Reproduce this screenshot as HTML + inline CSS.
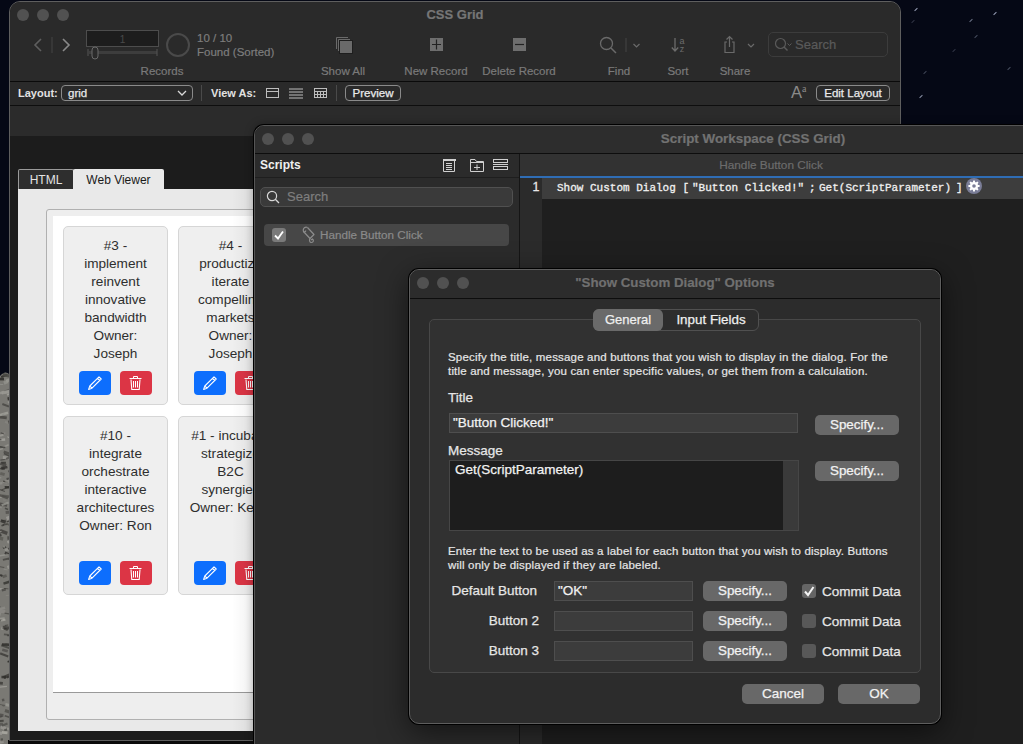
<!DOCTYPE html>
<html><head><meta charset="utf-8">
<style>
*{box-sizing:border-box;margin:0;padding:0}
html,body{width:1023px;height:744px;overflow:hidden;background:#05070f;font-family:"Liberation Sans",sans-serif}
.a{position:absolute}
.t{position:absolute;white-space:nowrap}
.w{-webkit-text-stroke:0.25px currentColor}
.dot{position:absolute;width:12px;height:12px;border-radius:50%;background:#515151}
</style></head><body>
<!-- desktop -->
<div class="a" style="left:0;top:0;width:1023px;height:744px;background:#050815"></div>
<div class="a" style="left:914px;top:9px;width:4px;height:1px;background:rgba(200,210,235,0.75);transform:rotate(-45deg)"></div>
<div class="a" style="left:993px;top:13px;width:4px;height:1px;background:rgba(200,210,235,0.75);transform:rotate(-45deg)"></div>
<div class="a" style="left:969px;top:20px;width:4px;height:1px;background:rgba(200,210,235,0.52);transform:rotate(-45deg)"></div>
<div class="a" style="left:974px;top:36px;width:4px;height:1px;background:rgba(200,210,235,0.34);transform:rotate(-45deg)"></div>
<div class="a" style="left:923px;top:72px;width:4px;height:1px;background:rgba(200,210,235,0.30);transform:rotate(-45deg)"></div>
<div class="a" style="left:1007px;top:68px;width:4px;height:1px;background:rgba(200,210,235,0.34);transform:rotate(-45deg)"></div>
<div class="a" style="left:919px;top:96px;width:4px;height:1px;background:rgba(200,210,235,0.68);transform:rotate(-45deg)"></div>
<div class="a" style="left:952px;top:50px;width:4px;height:1px;background:rgba(200,210,235,0.22);transform:rotate(-45deg)"></div>
<div class="a" style="left:911px;top:21px;width:4px;height:1px;background:rgba(200,210,235,0.22);transform:rotate(-45deg)"></div>

<svg class="a" style="left:0;top:368px" width="9" height="376" viewBox="0 0 9 376"><rect width="9" height="376" fill="#7a7974"/><rect x="-1.3" y="121.8" width="6.6" height="1.0" fill="#3c3b38" opacity="0.73" transform="rotate(20 1.9 121.8)"/><rect x="-2.1" y="80.7" width="4.9" height="1.4" fill="#9a9993" opacity="0.83" transform="rotate(-19 0.4 80.7)"/><rect x="3.9" y="83.9" width="8.6" height="2.4" fill="#2e2d2a" opacity="0.52" transform="rotate(18 8.2 83.9)"/><rect x="-1.4" y="108.9" width="2.8" height="1.6" fill="#9a9993" opacity="0.54" transform="rotate(4 -0.0 108.9)"/><rect x="-1.9" y="70.6" width="7.0" height="2.3" fill="#a8a7a1" opacity="0.77" transform="rotate(-4 1.6 70.6)"/><rect x="3.4" y="118.1" width="5.2" height="1.6" fill="#8c8b86" opacity="0.81" transform="rotate(-21 6.0 118.1)"/><rect x="2.4" y="112.9" width="4.4" height="2.0" fill="#9a9993" opacity="0.55" transform="rotate(-4 4.6 112.9)"/><rect x="-1.3" y="284.7" width="5.4" height="0.9" fill="#8c8b86" opacity="0.73" transform="rotate(19 1.4 284.7)"/><rect x="4.6" y="118.0" width="6.2" height="2.4" fill="#2e2d2a" opacity="0.88" transform="rotate(-1 7.7 118.0)"/><rect x="-2.3" y="249.7" width="6.9" height="2.5" fill="#a8a7a1" opacity="0.61" transform="rotate(-6 1.1 249.7)"/><rect x="-2.8" y="251.4" width="5.2" height="1.3" fill="#2e2d2a" opacity="0.59" transform="rotate(-11 -0.1 251.4)"/><rect x="1.4" y="277.6" width="8.4" height="2.1" fill="#3c3b38" opacity="0.72" transform="rotate(19 5.6 277.6)"/><rect x="6.5" y="308.0" width="3.9" height="1.9" fill="#3c3b38" opacity="0.88" transform="rotate(-17 8.5 308.0)"/><rect x="-0.4" y="66.3" width="3.6" height="2.1" fill="#a8a7a1" opacity="0.61" transform="rotate(-18 1.4 66.3)"/><rect x="3.7" y="201.0" width="4.2" height="1.1" fill="#8c8b86" opacity="0.76" transform="rotate(12 5.8 201.0)"/><rect x="6.6" y="171.7" width="8.7" height="2.6" fill="#a8a7a1" opacity="0.66" transform="rotate(-20 10.9 171.7)"/><rect x="-2.3" y="238.5" width="2.5" height="1.4" fill="#3c3b38" opacity="0.74" transform="rotate(-20 -1.1 238.5)"/><rect x="2.9" y="213.1" width="8.6" height="2.5" fill="#2e2d2a" opacity="0.75" transform="rotate(-18 7.2 213.1)"/><rect x="0.8" y="94.8" width="4.5" height="1.1" fill="#a8a7a1" opacity="0.69" transform="rotate(-9 3.1 94.8)"/><rect x="5.2" y="54.2" width="7.2" height="2.1" fill="#8c8b86" opacity="0.51" transform="rotate(23 8.8 54.2)"/><rect x="-1.4" y="198.6" width="5.8" height="0.9" fill="#4a4945" opacity="0.85" transform="rotate(10 1.5 198.6)"/><rect x="1.0" y="98.2" width="3.2" height="2.9" fill="#4a4945" opacity="0.63" transform="rotate(-14 2.6 98.2)"/><rect x="7.8" y="305.1" width="8.0" height="3.0" fill="#8c8b86" opacity="0.82" transform="rotate(-15 11.8 305.1)"/><rect x="5.0" y="185.3" width="8.9" height="2.9" fill="#2e2d2a" opacity="0.78" transform="rotate(23 9.5 185.3)"/><rect x="7.3" y="168.2" width="8.9" height="3.4" fill="#2e2d2a" opacity="0.54" transform="rotate(-1 11.8 168.2)"/><rect x="2.3" y="127.0" width="8.9" height="2.4" fill="#4a4945" opacity="0.64" transform="rotate(7 6.8 127.0)"/><rect x="-1.7" y="313.8" width="4.7" height="2.7" fill="#2e2d2a" opacity="0.67" transform="rotate(7 0.7 313.8)"/><rect x="7.4" y="32.6" width="7.1" height="2.1" fill="#9a9993" opacity="0.79" transform="rotate(-16 10.9 32.6)"/><rect x="-1.3" y="47.8" width="8.3" height="3.0" fill="#4a4945" opacity="0.89" transform="rotate(8 2.8 47.8)"/><rect x="3.0" y="131.8" width="2.9" height="0.8" fill="#8c8b86" opacity="0.54" transform="rotate(12 4.5 131.8)"/><rect x="7.9" y="52.4" width="3.4" height="3.2" fill="#2e2d2a" opacity="0.62" transform="rotate(-13 9.5 52.4)"/><rect x="-0.1" y="220.5" width="4.9" height="1.2" fill="#a8a7a1" opacity="0.86" transform="rotate(8 2.3 220.5)"/><rect x="2.7" y="306.5" width="7.8" height="3.2" fill="#2e2d2a" opacity="0.71" transform="rotate(-24 6.6 306.5)"/><rect x="-1.0" y="165.5" width="2.0" height="3.0" fill="#3c3b38" opacity="0.75" transform="rotate(-19 0.0 165.5)"/><rect x="4.5" y="23.2" width="5.7" height="2.1" fill="#8c8b86" opacity="0.52" transform="rotate(-15 7.4 23.2)"/><rect x="-1.9" y="15.9" width="5.2" height="0.9" fill="#9a9993" opacity="0.68" transform="rotate(6 0.7 15.9)"/><rect x="2.6" y="190.1" width="6.8" height="2.0" fill="#3c3b38" opacity="0.70" transform="rotate(-13 6.1 190.1)"/><rect x="6.6" y="196.7" width="8.5" height="3.3" fill="#9a9993" opacity="0.84" transform="rotate(-18 10.9 196.7)"/><rect x="1.9" y="45.7" width="2.5" height="1.4" fill="#4a4945" opacity="0.62" transform="rotate(-19 3.1 45.7)"/><rect x="7.3" y="292.1" width="6.5" height="1.8" fill="#2e2d2a" opacity="0.89" transform="rotate(-14 10.6 292.1)"/><rect x="1.4" y="358.1" width="5.4" height="3.5" fill="#9a9993" opacity="0.78" transform="rotate(25 4.1 358.1)"/><rect x="1.6" y="151.8" width="4.5" height="1.0" fill="#3c3b38" opacity="0.72" transform="rotate(-3 3.9 151.8)"/><rect x="0.6" y="6.8" width="6.4" height="2.2" fill="#2e2d2a" opacity="0.89" transform="rotate(-20 3.8 6.8)"/><rect x="-2.6" y="99.9" width="7.5" height="1.5" fill="#3c3b38" opacity="0.84" transform="rotate(9 1.2 99.9)"/><rect x="1.5" y="355.7" width="5.8" height="2.2" fill="#3c3b38" opacity="0.54" transform="rotate(-22 4.3 355.7)"/><rect x="1.7" y="258.8" width="2.5" height="3.3" fill="#a8a7a1" opacity="0.53" transform="rotate(18 2.9 258.8)"/><rect x="6.5" y="25.1" width="5.2" height="1.7" fill="#a8a7a1" opacity="0.75" transform="rotate(-23 9.1 25.1)"/><rect x="7.3" y="266.8" width="8.8" height="1.5" fill="#3c3b38" opacity="0.75" transform="rotate(2 11.7 266.8)"/><rect x="1.9" y="77.4" width="6.7" height="1.5" fill="#a8a7a1" opacity="0.51" transform="rotate(-24 5.3 77.4)"/><rect x="7.8" y="190.1" width="5.6" height="1.5" fill="#4a4945" opacity="0.83" transform="rotate(-3 10.6 190.1)"/><rect x="6.2" y="186.1" width="4.8" height="2.2" fill="#9a9993" opacity="0.64" transform="rotate(17 8.6 186.1)"/><rect x="4.0" y="265.7" width="4.8" height="1.7" fill="#2e2d2a" opacity="0.51" transform="rotate(6 6.4 265.7)"/><rect x="1.7" y="330.8" width="2.4" height="2.6" fill="#4a4945" opacity="0.77" transform="rotate(-11 2.9 330.8)"/><rect x="0.2" y="91.1" width="5.2" height="1.2" fill="#3c3b38" opacity="0.65" transform="rotate(-9 2.8 91.1)"/><rect x="0.6" y="370.3" width="2.2" height="3.2" fill="#2e2d2a" opacity="0.50" transform="rotate(-6 1.7 370.3)"/><rect x="2.5" y="178.5" width="3.4" height="2.2" fill="#3c3b38" opacity="0.83" transform="rotate(-18 4.2 178.5)"/><rect x="1.3" y="220.6" width="4.1" height="2.5" fill="#4a4945" opacity="0.84" transform="rotate(-17 3.4 220.6)"/><rect x="5.6" y="335.7" width="6.2" height="2.9" fill="#a8a7a1" opacity="0.56" transform="rotate(11 8.7 335.7)"/><rect x="-2.5" y="241.9" width="7.8" height="3.2" fill="#8c8b86" opacity="0.78" transform="rotate(0 1.4 241.9)"/><rect x="5.3" y="342.1" width="6.0" height="3.0" fill="#4a4945" opacity="0.73" transform="rotate(20 8.3 342.1)"/><rect x="4.6" y="256.8" width="3.6" height="0.9" fill="#3c3b38" opacity="0.88" transform="rotate(-6 6.4 256.8)"/><rect x="-2.4" y="169.7" width="2.1" height="2.2" fill="#3c3b38" opacity="0.50" transform="rotate(15 -1.4 169.7)"/><rect x="2.5" y="281.3" width="5.7" height="2.6" fill="#4a4945" opacity="0.69" transform="rotate(15 5.4 281.3)"/><rect x="-0.4" y="318.1" width="7.3" height="1.4" fill="#a8a7a1" opacity="0.70" transform="rotate(-6 3.2 318.1)"/><rect x="4.5" y="180.1" width="7.4" height="2.5" fill="#9a9993" opacity="0.74" transform="rotate(-8 8.2 180.1)"/><rect x="4.6" y="245.0" width="6.3" height="1.2" fill="#3c3b38" opacity="0.61" transform="rotate(9 7.8 245.0)"/><rect x="4.4" y="260.3" width="4.0" height="2.2" fill="#3c3b38" opacity="0.81" transform="rotate(25 6.5 260.3)"/><rect x="0.4" y="206.5" width="2.6" height="2.1" fill="#2e2d2a" opacity="0.83" transform="rotate(23 1.7 206.5)"/><rect x="-0.0" y="169.0" width="3.5" height="3.4" fill="#4a4945" opacity="0.54" transform="rotate(12 1.7 169.0)"/><rect x="1.0" y="98.4" width="6.2" height="2.5" fill="#2e2d2a" opacity="0.78" transform="rotate(-13 4.1 98.4)"/><rect x="2.3" y="337.5" width="2.2" height="0.8" fill="#3c3b38" opacity="0.66" transform="rotate(11 3.4 337.5)"/><rect x="1.1" y="156.5" width="2.8" height="1.7" fill="#3c3b38" opacity="0.84" transform="rotate(-19 2.6 156.5)"/><rect x="4.8" y="348.3" width="8.3" height="1.6" fill="#3c3b38" opacity="0.66" transform="rotate(18 9.0 348.3)"/><rect x="7.2" y="28.7" width="7.3" height="3.1" fill="#2e2d2a" opacity="0.83" transform="rotate(-11 10.8 28.7)"/><rect x="-0.3" y="351.8" width="3.9" height="2.2" fill="#3c3b38" opacity="0.81" transform="rotate(-4 1.7 351.8)"/><rect x="5.4" y="10.9" width="4.8" height="3.2" fill="#9a9993" opacity="0.79" transform="rotate(-23 7.8 10.9)"/><rect x="2.0" y="275.4" width="7.3" height="2.5" fill="#2e2d2a" opacity="0.86" transform="rotate(3 5.6 275.4)"/><rect x="1.6" y="64.2" width="4.0" height="1.5" fill="#8c8b86" opacity="0.60" transform="rotate(8 3.5 64.2)"/><rect x="3.1" y="113.1" width="4.8" height="1.3" fill="#2e2d2a" opacity="0.70" transform="rotate(16 5.5 113.1)"/><rect x="2.0" y="206.9" width="4.3" height="2.8" fill="#4a4945" opacity="0.58" transform="rotate(-20 4.1 206.9)"/><rect x="-2.0" y="128.6" width="3.7" height="1.5" fill="#9a9993" opacity="0.80" transform="rotate(-4 -0.2 128.6)"/><rect x="2.8" y="155.6" width="4.6" height="1.7" fill="#3c3b38" opacity="0.73" transform="rotate(-7 5.1 155.6)"/><rect x="2.8" y="258.2" width="7.5" height="3.1" fill="#2e2d2a" opacity="0.65" transform="rotate(7 6.6 258.2)"/><rect x="0.4" y="162.4" width="7.7" height="3.4" fill="#3c3b38" opacity="0.78" transform="rotate(20 4.3 162.4)"/><rect x="3.5" y="177.9" width="2.0" height="1.9" fill="#8c8b86" opacity="0.84" transform="rotate(24 4.5 177.9)"/><rect x="-1.8" y="93.4" width="3.1" height="2.2" fill="#8c8b86" opacity="0.78" transform="rotate(17 -0.3 93.4)"/><rect x="-2.1" y="336.5" width="7.4" height="0.8" fill="#4a4945" opacity="0.87" transform="rotate(7 1.7 336.5)"/><rect x="-1.6" y="114.2" width="3.8" height="2.5" fill="#9a9993" opacity="0.54" transform="rotate(-10 0.3 114.2)"/><rect x="-0.9" y="354.8" width="3.8" height="2.9" fill="#4a4945" opacity="0.62" transform="rotate(-2 1.0 354.8)"/><rect x="4.1" y="360.6" width="8.2" height="2.1" fill="#2e2d2a" opacity="0.51" transform="rotate(-4 8.2 360.6)"/><rect x="-2.4" y="244.3" width="3.4" height="3.2" fill="#9a9993" opacity="0.60" transform="rotate(8 -0.7 244.3)"/><rect x="-0.5" y="347.9" width="2.2" height="1.7" fill="#4a4945" opacity="0.66" transform="rotate(-25 0.6 347.9)"/><rect x="6.3" y="109.8" width="2.5" height="2.1" fill="#2e2d2a" opacity="0.59" transform="rotate(-14 7.5 109.8)"/><rect x="0.2" y="285.9" width="8.7" height="2.1" fill="#2e2d2a" opacity="0.69" transform="rotate(21 4.6 285.9)"/><rect x="3.5" y="21.2" width="8.5" height="0.9" fill="#4a4945" opacity="0.56" transform="rotate(-22 7.8 21.2)"/><rect x="1.3" y="22.6" width="8.3" height="3.2" fill="#9a9993" opacity="0.87" transform="rotate(-9 5.5 22.6)"/><rect x="7.3" y="69.8" width="7.2" height="0.9" fill="#a8a7a1" opacity="0.84" transform="rotate(24 10.9 69.8)"/><rect x="-1.8" y="166.4" width="2.5" height="1.0" fill="#2e2d2a" opacity="0.72" transform="rotate(13 -0.5 166.4)"/><rect x="5.5" y="142.9" width="4.2" height="3.0" fill="#4a4945" opacity="0.69" transform="rotate(-6 7.5 142.9)"/><rect x="-0.9" y="345.7" width="4.5" height="3.2" fill="#3c3b38" opacity="0.60" transform="rotate(6 1.4 345.7)"/><rect x="1.1" y="152.2" width="5.2" height="3.0" fill="#2e2d2a" opacity="0.80" transform="rotate(20 3.8 152.2)"/><rect x="-0.0" y="127.5" width="8.7" height="2.5" fill="#4a4945" opacity="0.78" transform="rotate(21 4.3 127.5)"/><rect x="4.9" y="111.8" width="6.2" height="3.0" fill="#9a9993" opacity="0.51" transform="rotate(-13 8.0 111.8)"/><rect x="7.5" y="178.7" width="8.7" height="1.8" fill="#3c3b38" opacity="0.83" transform="rotate(-18 11.9 178.7)"/><rect x="-2.9" y="186.7" width="8.5" height="1.6" fill="#9a9993" opacity="0.74" transform="rotate(-9 1.4 186.7)"/><rect x="1.0" y="120.2" width="7.5" height="1.0" fill="#2e2d2a" opacity="0.60" transform="rotate(-22 4.7 120.2)"/><rect x="3.1" y="12.7" width="4.3" height="3.4" fill="#9a9993" opacity="0.61" transform="rotate(-21 5.2 12.7)"/><rect x="2.5" y="36.3" width="7.0" height="2.0" fill="#3c3b38" opacity="0.68" transform="rotate(20 6.0 36.3)"/><rect x="2.9" y="88.3" width="7.4" height="2.9" fill="#a8a7a1" opacity="0.62" transform="rotate(3 6.6 88.3)"/><rect x="5.1" y="140.2" width="3.4" height="1.5" fill="#2e2d2a" opacity="0.61" transform="rotate(20 6.8 140.2)"/><rect x="-2.3" y="70.8" width="3.8" height="1.5" fill="#4a4945" opacity="0.82" transform="rotate(8 -0.4 70.8)"/><rect x="-1.9" y="372.6" width="5.3" height="3.0" fill="#a8a7a1" opacity="0.52" transform="rotate(-10 0.8 372.6)"/><rect x="-0.9" y="44.8" width="8.8" height="2.4" fill="#a8a7a1" opacity="0.71" transform="rotate(-16 3.5 44.8)"/><rect x="5.5" y="226.7" width="6.7" height="0.8" fill="#8c8b86" opacity="0.75" transform="rotate(-14 8.9 226.7)"/><rect x="-1.4" y="138.6" width="3.4" height="1.5" fill="#8c8b86" opacity="0.87" transform="rotate(16 0.3 138.6)"/><rect x="1.5" y="307.9" width="4.6" height="2.5" fill="#2e2d2a" opacity="0.82" transform="rotate(2 3.8 307.9)"/><rect x="-1.9" y="23.8" width="4.8" height="2.3" fill="#9a9993" opacity="0.76" transform="rotate(-5 0.5 23.8)"/><rect x="7.9" y="102.0" width="6.7" height="1.9" fill="#4a4945" opacity="0.73" transform="rotate(-7 11.2 102.0)"/><rect x="6.5" y="156.6" width="9.0" height="1.8" fill="#4a4945" opacity="0.66" transform="rotate(22 11.0 156.6)"/><rect x="-1.3" y="163.2" width="2.8" height="1.0" fill="#a8a7a1" opacity="0.68" transform="rotate(-17 0.1 163.2)"/><rect x="3.1" y="5.6" width="6.5" height="3.3" fill="#4a4945" opacity="0.87" transform="rotate(12 6.3 5.6)"/><rect x="0.8" y="64.6" width="3.1" height="1.3" fill="#3c3b38" opacity="0.70" transform="rotate(15 2.4 64.6)"/><rect x="-0.8" y="363.5" width="2.9" height="3.3" fill="#a8a7a1" opacity="0.63" transform="rotate(5 0.6 363.5)"/><rect x="-2.1" y="239.3" width="7.0" height="2.7" fill="#8c8b86" opacity="0.81" transform="rotate(-14 1.4 239.3)"/><rect x="6.3" y="152.1" width="7.8" height="1.3" fill="#3c3b38" opacity="0.88" transform="rotate(-17 10.2 152.1)"/><rect x="-1.4" y="135.1" width="8.8" height="3.0" fill="#4a4945" opacity="0.84" transform="rotate(9 3.0 135.1)"/><rect x="0.6" y="251.1" width="4.7" height="2.0" fill="#a8a7a1" opacity="0.76" transform="rotate(-10 2.9 251.1)"/><rect x="1.3" y="93.7" width="4.6" height="2.2" fill="#2e2d2a" opacity="0.75" transform="rotate(-1 3.6 93.7)"/><rect x="5.4" y="88.5" width="7.5" height="2.0" fill="#3c3b38" opacity="0.66" transform="rotate(-22 9.1 88.5)"/><rect x="1.0" y="134.8" width="7.6" height="2.2" fill="#9a9993" opacity="0.75" transform="rotate(-21 4.8 134.8)"/><rect x="5.6" y="275.8" width="5.6" height="0.9" fill="#3c3b38" opacity="0.76" transform="rotate(14 8.3 275.8)"/><rect x="-2.3" y="9.7" width="6.3" height="2.7" fill="#2e2d2a" opacity="0.89" transform="rotate(-0 0.9 9.7)"/><rect x="7.1" y="359.7" width="3.2" height="2.9" fill="#9a9993" opacity="0.83" transform="rotate(6 8.7 359.7)"/><rect x="0.6" y="94.8" width="6.3" height="3.2" fill="#3c3b38" opacity="0.70" transform="rotate(21 3.7 94.8)"/><rect x="-0.1" y="78.3" width="5.5" height="1.7" fill="#2e2d2a" opacity="0.66" transform="rotate(7 2.7 78.3)"/><rect x="0.6" y="104.6" width="4.6" height="2.9" fill="#4a4945" opacity="0.52" transform="rotate(18 2.9 104.6)"/><rect x="2.0" y="363.3" width="5.7" height="2.7" fill="#a8a7a1" opacity="0.90" transform="rotate(6 4.8 363.3)"/><rect x="5.8" y="148.2" width="3.9" height="3.5" fill="#a8a7a1" opacity="0.63" transform="rotate(-21 7.7 148.2)"/><rect x="3.8" y="86.5" width="8.7" height="1.6" fill="#3c3b38" opacity="0.76" transform="rotate(24 8.1 86.5)"/><rect x="4.3" y="220.3" width="4.2" height="0.8" fill="#2e2d2a" opacity="0.62" transform="rotate(6 6.4 220.3)"/><path d="M0 8 Q5 2 9 6 L9 0 L0 0Z" fill="#050815"/></svg>

<!-- MAIN WINDOW -->
<div class="a" style="left:8px;top:740px;width:260px;height:4px;background:#0b0b0b"></div>
<div id="main" class="a" style="left:9px;top:1px;width:892px;height:740px;border-radius:11px 11px 0 0;background:#1c1c1c;border:1px solid #5e5e5e;overflow:hidden">
  <div class="a" style="left:0;top:0;width:892px;height:79px;background:#2a2a2a"></div>
  <div class="a" style="left:0;top:79px;width:892px;height:1px;background:#0a0a0a"></div>
  <div class="a" style="left:0;top:80px;width:892px;height:23px;background:#2a2a2a"></div>
  <div class="a" style="left:0;top:103px;width:892px;height:1px;background:#0e0e0e"></div>
  <div class="a" style="left:0;top:104px;width:892px;height:30px;background:#2b2b2b"></div>
  <div class="a" style="left:0;top:134px;width:892px;height:610px;background:#1c1c1c"></div>
</div>
<div class="dot" style="left:17px;top:9px"></div>
<div class="dot" style="left:37px;top:9px"></div>
<div class="dot" style="left:57px;top:9px"></div>
<div class="t" style="left:405px;top:7px;width:100px;text-align:center;font:bold 13px 'Liberation Sans';color:#767676;-webkit-text-stroke:0.2px #767676">CSS Grid</div>

<!-- toolbar: records -->
<svg class="a" style="left:30px;top:36px" width="46" height="18" viewBox="0 0 46 18"><path d="M11 3 L5 9 L11 15" fill="none" stroke="#5f5f5f" stroke-width="1.6"/><path d="M22 1 V17" stroke="#444" stroke-width="1"/><path d="M33 3 L39 9 L33 15" fill="none" stroke="#8a8a8a" stroke-width="1.6"/></svg>
<div class="a" style="left:86px;top:30px;width:73px;height:17px;background:#1d1d1d;border:1px solid #4d4d4d"></div>
<div class="t" style="left:86px;top:34px;width:73px;text-align:center;font:10px 'Liberation Sans';color:#4a4a4a">1</div>
<svg class="a" style="left:86px;top:46px" width="74" height="14" viewBox="0 0 74 14"><rect x="3" y="5" width="68" height="3" fill="#3d3d3d"/><path d="M2 3 V10 M71 3 V10" stroke="#555" stroke-width="1"/><rect x="6" y="1" width="6" height="12" rx="3" fill="#2a2a2a" stroke="#6a6a6a" stroke-width="1"/></svg>
<div class="a" style="left:166px;top:33px;width:24px;height:24px;border-radius:50%;border:2.5px solid #4a4a4a"></div>
<div class="t" style="left:197px;top:32px;font:11.5px 'Liberation Sans';color:#7d7d7d;-webkit-text-stroke:0.2px #7d7d7d">10 / 10</div>
<div class="t" style="left:197px;top:46px;font:11.5px 'Liberation Sans';color:#7d7d7d;-webkit-text-stroke:0.2px #7d7d7d">Found (Sorted)</div>
<div class="t" style="left:122px;top:65px;width:80px;text-align:center;font:11.5px 'Liberation Sans';color:#7a7a7a;-webkit-text-stroke:0.2px #7a7a7a">Records</div>

<!-- show all / new / delete -->
<svg class="a" style="left:334px;top:36px" width="20" height="18" viewBox="0 0 20 18"><path d="M2.5 13 V1.5 H14" fill="none" stroke="#6a6a6a"/><path d="M4.5 15 V3.5 H16" fill="none" stroke="#6a6a6a"/><rect x="5" y="4" width="14" height="14" fill="#1e1e1e"/><rect x="6" y="5" width="12" height="12" fill="#6a6a6a"/></svg>
<div class="t" style="left:303px;top:65px;width:80px;text-align:center;font:11.5px 'Liberation Sans';color:#7a7a7a;-webkit-text-stroke:0.2px #7a7a7a">Show All</div>
<svg class="a" style="left:430px;top:38px" width="13" height="13" viewBox="0 0 13 13"><rect width="13" height="13" fill="#6e6e6e"/><path d="M6.5 1.5 V11.5 M2 6.5 H11" stroke="#222" stroke-width="1.2"/></svg>
<div class="t" style="left:386px;top:65px;width:100px;text-align:center;font:11.5px 'Liberation Sans';color:#7a7a7a;-webkit-text-stroke:0.2px #7a7a7a">New Record</div>
<svg class="a" style="left:513px;top:38px" width="13" height="13" viewBox="0 0 13 13"><rect width="13" height="13" fill="#6e6e6e"/><path d="M2 6.5 H11" stroke="#222" stroke-width="1.2"/></svg>
<div class="t" style="left:469px;top:65px;width:100px;text-align:center;font:11.5px 'Liberation Sans';color:#7a7a7a;-webkit-text-stroke:0.2px #7a7a7a">Delete Record</div>

<!-- find / sort / share -->
<svg class="a" style="left:598px;top:36px" width="46" height="18" viewBox="0 0 46 18"><circle cx="8.5" cy="7.5" r="6" fill="none" stroke="#6a6a6a" stroke-width="1.3"/><path d="M13 12 L18 17" stroke="#6a6a6a" stroke-width="1.5"/><path d="M28 2 V16" stroke="#444"/><path d="M35.5 8 L38.5 11 L41.5 8" fill="none" stroke="#6a6a6a" stroke-width="1.2"/></svg>
<div class="t" style="left:589px;top:65px;width:60px;text-align:center;font:11.5px 'Liberation Sans';color:#7a7a7a;-webkit-text-stroke:0.2px #7a7a7a">Find</div>
<svg class="a" style="left:670px;top:35px" width="18" height="19" viewBox="0 0 18 19"><path d="M5 3 V16 M1.8 12.5 L5 16 L8.2 12.5" fill="none" stroke="#6c6c6c" stroke-width="1.3"/><text x="9.5" y="8.5" font-family="Liberation Sans" font-size="9" fill="#6c6c6c">a</text><text x="9.8" y="17" font-family="Liberation Sans" font-size="9" fill="#6c6c6c">z</text></svg>
<div class="t" style="left:648px;top:65px;width:60px;text-align:center;font:11.5px 'Liberation Sans';color:#7a7a7a;-webkit-text-stroke:0.2px #7a7a7a">Sort</div>
<svg class="a" style="left:722px;top:35px" width="36" height="20" viewBox="0 0 36 20"><path d="M7.5 1.5 V12 M4.5 4.5 L7.5 1.5 L10.5 4.5" fill="none" stroke="#6a6a6a" stroke-width="1.2"/><path d="M5 7 H3 V17.5 H12 V7 H10" fill="none" stroke="#6a6a6a" stroke-width="1.2"/><path d="M26 9 L29 12 L32 9" fill="none" stroke="#6a6a6a" stroke-width="1.2"/></svg>
<div class="t" style="left:705px;top:65px;width:60px;text-align:center;font:11.5px 'Liberation Sans';color:#7a7a7a;-webkit-text-stroke:0.2px #7a7a7a">Share</div>
<div class="a" style="left:768px;top:32px;width:120px;height:25px;border:1px solid #3c3c3c;border-radius:5px;background:#2a2a2a"></div>
<svg class="a" style="left:774px;top:37px" width="20" height="16" viewBox="0 0 20 16"><circle cx="6.5" cy="6.5" r="5" fill="none" stroke="#5a5a5a" stroke-width="1.2"/><path d="M10 10 L13.5 13.5" stroke="#5a5a5a" stroke-width="1.4"/><path d="M13.5 6.5 L15.5 8.5 L17.5 6.5" fill="none" stroke="#5a5a5a" stroke-width="1"/></svg>
<div class="t" style="left:795px;top:37px;font:13px 'Liberation Sans';color:#5a5a5a;-webkit-text-stroke:0.2px #5a5a5a">Search</div>

<!-- layout bar -->
<div class="t" style="left:18px;top:87px;font:bold 11px 'Liberation Sans';color:#e2e2e2">Layout:</div>
<div class="a" style="left:61px;top:85px;width:132px;height:16px;border:1px solid #8a8a8a;border-radius:4px"></div>
<div class="t" style="left:68px;top:87px;font:11.5px 'Liberation Sans';color:#e8e8e8;-webkit-text-stroke:0.25px #e8e8e8">grid</div>
<svg class="a" style="left:176px;top:88px" width="12" height="10" viewBox="0 0 12 10"><path d="M2 3 L6 7 L10 3" fill="none" stroke="#d8d8d8" stroke-width="1.3"/></svg>
<div class="a" style="left:201px;top:85px;width:1px;height:16px;background:#4a4a4a"></div>
<div class="t" style="left:211px;top:87px;font:bold 11px 'Liberation Sans';color:#e2e2e2">View As:</div>
<svg class="a" style="left:265px;top:87px" width="64" height="12" viewBox="0 0 64 12"><rect x="1.5" y="1.5" width="12" height="9" fill="none" stroke="#bdbdbd"/><path d="M1.5 4.5 H13.5" stroke="#bdbdbd"/><path d="M24 2 H38 M24 5 H38 M24 8 H38 M24 11 H38" stroke="#bdbdbd"/><rect x="49.5" y="1.5" width="12" height="9" fill="none" stroke="#bdbdbd"/><path d="M49.5 4.5 H61.5 M49.5 7.5 H61.5 M52.5 4.5 V10.5 M55.5 4.5 V10.5 M58.5 4.5 V10.5" stroke="#bdbdbd"/></svg>
<div class="a" style="left:336px;top:85px;width:1px;height:16px;background:#4a4a4a"></div>
<div class="a" style="left:345px;top:85px;width:56px;height:16px;border:1px solid #8a8a8a;border-radius:4px"></div>
<div class="t" style="left:345px;top:87px;width:56px;text-align:center;font:11.5px 'Liberation Sans';color:#eaeaea;-webkit-text-stroke:0.25px #eaeaea">Preview</div>
<div class="t" style="left:791px;top:83px;font:16.5px 'Liberation Sans';color:#8a8a8a;line-height:18px">A<span style="font:10px 'Liberation Serif';vertical-align:6px">a</span></div>
<div class="a" style="left:816px;top:85px;width:74px;height:16px;border:1px solid #8a8a8a;border-radius:4px"></div>
<div class="t" style="left:816px;top:87px;width:74px;text-align:center;font:11.5px 'Liberation Sans';color:#eaeaea;-webkit-text-stroke:0.25px #eaeaea">Edit Layout</div>

<!-- web viewer panel -->
<div class="a" style="left:18px;top:169px;width:56px;height:21px;background:#2e2e2e;border:1px solid #9a9a9a;border-bottom:none;border-radius:2px 2px 0 0"></div>
<div class="t" style="left:18px;top:173px;width:56px;text-align:center;font:12px 'Liberation Sans';color:#e4e4e4">HTML</div>
<div class="a" style="left:18px;top:189px;width:240px;height:542px;background:#e9e9e9"></div>
<div class="a" style="left:73px;top:169px;width:91px;height:21px;background:#e9e9e9;border-radius:2px 2px 0 0"></div>
<div class="t" style="left:73px;top:173px;width:91px;text-align:center;font:12px 'Liberation Sans';color:#1a1a1a">Web Viewer</div>
<div class="a" style="left:46px;top:209px;width:220px;height:511px;border:1px solid #b0b0b0;border-radius:3px;background:#eeeeee"></div>
<div class="a" style="left:53px;top:216px;width:210px;height:477px;background:#fff;border-bottom:1px solid #999"></div>
<div class="a" style="left:63px;top:226px;width:105px;height:179px;background:#efefef;border:1px solid #d6d6d6;border-radius:5px"></div>
<div class="t" style="left:43px;top:237.5px;width:145px;height:18px;line-height:18px;text-align:center;font:13.6px 'Liberation Sans';color:#2e2e2e">#3 -</div>
<div class="t" style="left:43px;top:255.5px;width:145px;height:18px;line-height:18px;text-align:center;font:13.6px 'Liberation Sans';color:#2e2e2e">implement</div>
<div class="t" style="left:43px;top:273.5px;width:145px;height:18px;line-height:18px;text-align:center;font:13.6px 'Liberation Sans';color:#2e2e2e">reinvent</div>
<div class="t" style="left:43px;top:291.5px;width:145px;height:18px;line-height:18px;text-align:center;font:13.6px 'Liberation Sans';color:#2e2e2e">innovative</div>
<div class="t" style="left:43px;top:309.5px;width:145px;height:18px;line-height:18px;text-align:center;font:13.6px 'Liberation Sans';color:#2e2e2e">bandwidth</div>
<div class="t" style="left:43px;top:327.5px;width:145px;height:18px;line-height:18px;text-align:center;font:13.6px 'Liberation Sans';color:#2e2e2e">Owner:</div>
<div class="t" style="left:43px;top:345.5px;width:145px;height:18px;line-height:18px;text-align:center;font:13.6px 'Liberation Sans';color:#2e2e2e">Joseph</div>
<div class="a" style="left:79px;top:371px;width:32px;height:24px;background:#0d6efd;border-radius:4px"></div>
<svg class="a" style="left:87px;top:375px" width="16" height="16" viewBox="0 0 16 16"><path d="M12 1.8 L14.2 4 L5 13.2 L1.6 14.4 L2.8 11 Z M10.5 3.3 L12.7 5.5 M2.8 11 L5 13.2" fill="none" stroke="#fff" stroke-width="1.1" stroke-linejoin="round"/></svg>
<div class="a" style="left:120px;top:371px;width:32px;height:24px;background:#dc3545;border-radius:4px"></div>
<svg class="a" style="left:128px;top:375px" width="16" height="16" viewBox="0 0 16 16" style="margin-left:1px"><path d="M1.5 3.5 H13.5 M5.5 3 V1.5 H9.5 V3" fill="none" stroke="#fff" stroke-width="1"/><path d="M3 4.5 L3.8 14.5 H11.2 L12 4.5" fill="none" stroke="#fff" stroke-width="1.1"/><path d="M5.5 6 V12.5 M7.5 6 V12.5 M9.5 6 V12.5" stroke="#fff" stroke-width="1"/></svg>
<div class="a" style="left:178px;top:226px;width:105px;height:179px;background:#efefef;border:1px solid #d6d6d6;border-radius:5px"></div>
<div class="t" style="left:158px;top:237.5px;width:145px;height:18px;line-height:18px;text-align:center;font:13.6px 'Liberation Sans';color:#2e2e2e">#4 -</div>
<div class="t" style="left:158px;top:255.5px;width:145px;height:18px;line-height:18px;text-align:center;font:13.6px 'Liberation Sans';color:#2e2e2e">productize</div>
<div class="t" style="left:158px;top:273.5px;width:145px;height:18px;line-height:18px;text-align:center;font:13.6px 'Liberation Sans';color:#2e2e2e">iterate</div>
<div class="t" style="left:158px;top:291.5px;width:145px;height:18px;line-height:18px;text-align:center;font:13.6px 'Liberation Sans';color:#2e2e2e">compelling</div>
<div class="t" style="left:158px;top:309.5px;width:145px;height:18px;line-height:18px;text-align:center;font:13.6px 'Liberation Sans';color:#2e2e2e">markets</div>
<div class="t" style="left:158px;top:327.5px;width:145px;height:18px;line-height:18px;text-align:center;font:13.6px 'Liberation Sans';color:#2e2e2e">Owner:</div>
<div class="t" style="left:158px;top:345.5px;width:145px;height:18px;line-height:18px;text-align:center;font:13.6px 'Liberation Sans';color:#2e2e2e">Joseph</div>
<div class="a" style="left:194px;top:371px;width:32px;height:24px;background:#0d6efd;border-radius:4px"></div>
<svg class="a" style="left:202px;top:375px" width="16" height="16" viewBox="0 0 16 16"><path d="M12 1.8 L14.2 4 L5 13.2 L1.6 14.4 L2.8 11 Z M10.5 3.3 L12.7 5.5 M2.8 11 L5 13.2" fill="none" stroke="#fff" stroke-width="1.1" stroke-linejoin="round"/></svg>
<div class="a" style="left:235px;top:371px;width:32px;height:24px;background:#dc3545;border-radius:4px"></div>
<svg class="a" style="left:243px;top:375px" width="16" height="16" viewBox="0 0 16 16" style="margin-left:1px"><path d="M1.5 3.5 H13.5 M5.5 3 V1.5 H9.5 V3" fill="none" stroke="#fff" stroke-width="1"/><path d="M3 4.5 L3.8 14.5 H11.2 L12 4.5" fill="none" stroke="#fff" stroke-width="1.1"/><path d="M5.5 6 V12.5 M7.5 6 V12.5 M9.5 6 V12.5" stroke="#fff" stroke-width="1"/></svg>
<div class="a" style="left:63px;top:416px;width:105px;height:179px;background:#efefef;border:1px solid #d6d6d6;border-radius:5px"></div>
<div class="t" style="left:43px;top:427.5px;width:145px;height:18px;line-height:18px;text-align:center;font:13.6px 'Liberation Sans';color:#2e2e2e">#10 -</div>
<div class="t" style="left:43px;top:445.5px;width:145px;height:18px;line-height:18px;text-align:center;font:13.6px 'Liberation Sans';color:#2e2e2e">integrate</div>
<div class="t" style="left:43px;top:463.5px;width:145px;height:18px;line-height:18px;text-align:center;font:13.6px 'Liberation Sans';color:#2e2e2e">orchestrate</div>
<div class="t" style="left:43px;top:481.5px;width:145px;height:18px;line-height:18px;text-align:center;font:13.6px 'Liberation Sans';color:#2e2e2e">interactive</div>
<div class="t" style="left:43px;top:499.5px;width:145px;height:18px;line-height:18px;text-align:center;font:13.6px 'Liberation Sans';color:#2e2e2e">architectures</div>
<div class="t" style="left:43px;top:517.5px;width:145px;height:18px;line-height:18px;text-align:center;font:13.6px 'Liberation Sans';color:#2e2e2e">Owner: Ron</div>
<div class="a" style="left:79px;top:561px;width:32px;height:24px;background:#0d6efd;border-radius:4px"></div>
<svg class="a" style="left:87px;top:565px" width="16" height="16" viewBox="0 0 16 16"><path d="M12 1.8 L14.2 4 L5 13.2 L1.6 14.4 L2.8 11 Z M10.5 3.3 L12.7 5.5 M2.8 11 L5 13.2" fill="none" stroke="#fff" stroke-width="1.1" stroke-linejoin="round"/></svg>
<div class="a" style="left:120px;top:561px;width:32px;height:24px;background:#dc3545;border-radius:4px"></div>
<svg class="a" style="left:128px;top:565px" width="16" height="16" viewBox="0 0 16 16" style="margin-left:1px"><path d="M1.5 3.5 H13.5 M5.5 3 V1.5 H9.5 V3" fill="none" stroke="#fff" stroke-width="1"/><path d="M3 4.5 L3.8 14.5 H11.2 L12 4.5" fill="none" stroke="#fff" stroke-width="1.1"/><path d="M5.5 6 V12.5 M7.5 6 V12.5 M9.5 6 V12.5" stroke="#fff" stroke-width="1"/></svg>
<div class="a" style="left:178px;top:416px;width:105px;height:179px;background:#efefef;border:1px solid #d6d6d6;border-radius:5px"></div>
<div class="t" style="left:158px;top:427.5px;width:145px;height:18px;line-height:18px;text-align:center;font:13.6px 'Liberation Sans';color:#2e2e2e">#1 - incubate</div>
<div class="t" style="left:158px;top:445.5px;width:145px;height:18px;line-height:18px;text-align:center;font:13.6px 'Liberation Sans';color:#2e2e2e">strategize</div>
<div class="t" style="left:158px;top:463.5px;width:145px;height:18px;line-height:18px;text-align:center;font:13.6px 'Liberation Sans';color:#2e2e2e">B2C</div>
<div class="t" style="left:158px;top:481.5px;width:145px;height:18px;line-height:18px;text-align:center;font:13.6px 'Liberation Sans';color:#2e2e2e">synergies</div>
<div class="t" style="left:158px;top:499.5px;width:145px;height:18px;line-height:18px;text-align:center;font:13.6px 'Liberation Sans';color:#2e2e2e">Owner: Kevin</div>
<div class="a" style="left:194px;top:561px;width:32px;height:24px;background:#0d6efd;border-radius:4px"></div>
<svg class="a" style="left:202px;top:565px" width="16" height="16" viewBox="0 0 16 16"><path d="M12 1.8 L14.2 4 L5 13.2 L1.6 14.4 L2.8 11 Z M10.5 3.3 L12.7 5.5 M2.8 11 L5 13.2" fill="none" stroke="#fff" stroke-width="1.1" stroke-linejoin="round"/></svg>
<div class="a" style="left:235px;top:561px;width:32px;height:24px;background:#dc3545;border-radius:4px"></div>
<svg class="a" style="left:243px;top:565px" width="16" height="16" viewBox="0 0 16 16" style="margin-left:1px"><path d="M1.5 3.5 H13.5 M5.5 3 V1.5 H9.5 V3" fill="none" stroke="#fff" stroke-width="1"/><path d="M3 4.5 L3.8 14.5 H11.2 L12 4.5" fill="none" stroke="#fff" stroke-width="1.1"/><path d="M5.5 6 V12.5 M7.5 6 V12.5 M9.5 6 V12.5" stroke="#fff" stroke-width="1"/></svg>
<div class="a" style="left:232px;top:189px;width:22px;height:542px;background:linear-gradient(90deg,rgba(0,0,0,0),rgba(0,0,0,0.06))"></div>

<!-- SCRIPT WORKSPACE -->
<div class="a" style="left:254px;top:125px;width:790px;height:640px;border-radius:10px;border:1px solid #555;background:#1f1f1f;overflow:hidden;box-shadow:0 0 0 1px #000,0 0 10px rgba(0,0,0,.35)">
  <div class="a" style="left:0;top:0;width:790px;height:27px;background:#2d2d2d"></div>
  <div class="a" style="left:0;top:27px;width:790px;height:1px;background:#0d0d0d"></div>
  <div class="a" style="left:0;top:28px;width:264px;height:620px;background:#2b2b2b"></div>
  <div class="a" style="left:0;top:51px;width:264px;height:1px;background:#1e1e1e"></div>
  <div class="a" style="left:264px;top:28px;width:1px;height:620px;background:#151515"></div>
  <div class="a" style="left:265px;top:28px;width:530px;height:22px;background:#323232"></div>
  <div class="a" style="left:265px;top:50px;width:530px;height:2px;background:#2f6db5"></div>
  <div class="a" style="left:265px;top:52px;width:22px;height:600px;background:#2b2b2b"></div>
  <div class="a" style="left:287px;top:52px;width:500px;height:21px;background:#3d3d3d"></div>
</div>
<div class="dot" style="left:262px;top:133px"></div>
<div class="dot" style="left:282px;top:133px"></div>
<div class="dot" style="left:302px;top:133px"></div>
<div class="t" style="left:653px;top:131px;width:200px;text-align:center;font:bold 13.4px 'Liberation Sans';color:#727272;-webkit-text-stroke:0.2px #727272">Script Workspace (CSS Grid)</div>
<div class="t" style="left:260px;top:158px;font:bold 12px 'Liberation Sans';color:#f0f0f0">Scripts</div>
<svg class="a" style="left:442px;top:158px" width="68" height="15" viewBox="0 0 68 15"><path d="M1.5 1.5 V13.5 H12.5 V3" fill="none" stroke="#d0d0d0"/><rect x="1" y="1" width="13" height="2" fill="#d0d0d0"/><path d="M4 5.5 H10 M4 7.5 H10 M4 9.5 H10 M4 11.5 H10" stroke="#d0d0d0"/><path d="M28.5 13.5 V1.5 H33 L34.5 3.5 H41.5 V13.5 Z M28.5 4.5 H41.5" fill="none" stroke="#d0d0d0"/><path d="M35 6.5 V12 M32 9.5 H38" stroke="#d0d0d0"/><rect x="51.5" y="1.5" width="14" height="3" fill="none" stroke="#d0d0d0"/><path d="M51 6.5 H66" stroke="#d0d0d0"/><rect x="51.5" y="8.5" width="14" height="3" fill="none" stroke="#d0d0d0"/></svg>
<div class="a" style="left:260px;top:187px;width:253px;height:20px;background:#3a3a3a;border:1px solid #505050;border-radius:5px"></div>
<svg class="a" style="left:266px;top:190px" width="15" height="15" viewBox="0 0 15 15"><circle cx="6" cy="6" r="4.6" fill="none" stroke="#d8d8d8" stroke-width="1.2"/><path d="M9.3 9.3 L13 13" stroke="#d8d8d8" stroke-width="1.3"/></svg>
<div class="t" style="left:287px;top:189px;font:13px 'Liberation Sans';color:#7e7e7e;-webkit-text-stroke:0.2px #7e7e7e">Search</div>
<div class="a" style="left:264px;top:224px;width:245px;height:22px;background:#474747;border-radius:4px"></div>
<div class="a" style="left:272px;top:228px;width:14px;height:14px;background:#7a7a7a;border-radius:3px"></div>
<svg class="a" style="left:272px;top:228px" width="14" height="14" viewBox="0 0 14 14"><path d="M3 7.5 L6 10.5 L11 3.5" fill="none" stroke="#fff" stroke-width="1.8"/></svg>
<svg class="a" style="left:301px;top:226px" width="15" height="18" viewBox="0 0 15 18"><path d="M6.5 1.5 L13 8.5 L9 12.5 L2.5 5.5" fill="none" stroke="#8c8c8c" stroke-width="1.2" stroke-linejoin="round"/><path d="M6.5 1.5 C4.5 0.5 1.5 2 2.5 5.5 C3.5 6.5 5 5.5 4.5 4.5" fill="none" stroke="#8c8c8c" stroke-width="1.2"/><path d="M9 12.5 C8 14 8.5 16.5 10.5 16.5 C12.5 16.5 13 14 11.5 13 L10 14" fill="none" stroke="#8c8c8c" stroke-width="1.2"/></svg>
<div class="t" style="left:320px;top:228px;font:11.7px 'Liberation Sans';color:#8a8a8a;-webkit-text-stroke:0.2px #8a8a8a">Handle Button Click</div>
<div class="t" style="left:671px;top:158px;width:200px;text-align:center;font:11.8px 'Liberation Sans';color:#6c6c6c;-webkit-text-stroke:0.2px #6c6c6c">Handle Button Click</div>
<div class="t" style="left:530px;top:180px;width:12px;text-align:center;font:12.5px 'Liberation Sans';color:#e8e8e8;-webkit-text-stroke:0.3px #e8e8e8">1</div>
<div class="t" style="left:557px;top:182px;font:11px 'Liberation Mono';color:#f0f0f0;-webkit-text-stroke:0.3px #f0f0f0">Show Custom Dialog [</div>
<div class="t" style="left:692px;top:182px;font:11px 'Liberation Mono';color:#f0f0f0;-webkit-text-stroke:0.3px #f0f0f0">"Button Clicked!"</div>
<div class="t" style="left:809px;top:182px;font:11px 'Liberation Mono';color:#f0f0f0;-webkit-text-stroke:0.3px #f0f0f0">;</div>
<div class="t" style="left:819px;top:182px;font:11px 'Liberation Mono';color:#f0f0f0;-webkit-text-stroke:0.3px #f0f0f0">Get(ScriptParameter)</div>
<div class="t" style="left:956px;top:182px;font:11px 'Liberation Mono';color:#f0f0f0;-webkit-text-stroke:0.3px #f0f0f0">]</div>
<svg class="a" style="left:966px;top:178px" width="16" height="16" viewBox="0 0 16 16"><circle cx="8" cy="8" r="8" fill="#7a7d97"/><rect x="7" y="2.4" width="2" height="2.6" rx="0.5" fill="#fff" transform="rotate(0 8 8)"/><rect x="7" y="2.4" width="2" height="2.6" rx="0.5" fill="#fff" transform="rotate(45 8 8)"/><rect x="7" y="2.4" width="2" height="2.6" rx="0.5" fill="#fff" transform="rotate(90 8 8)"/><rect x="7" y="2.4" width="2" height="2.6" rx="0.5" fill="#fff" transform="rotate(135 8 8)"/><rect x="7" y="2.4" width="2" height="2.6" rx="0.5" fill="#fff" transform="rotate(180 8 8)"/><rect x="7" y="2.4" width="2" height="2.6" rx="0.5" fill="#fff" transform="rotate(225 8 8)"/><rect x="7" y="2.4" width="2" height="2.6" rx="0.5" fill="#fff" transform="rotate(270 8 8)"/><rect x="7" y="2.4" width="2" height="2.6" rx="0.5" fill="#fff" transform="rotate(315 8 8)"/><circle cx="8" cy="8" r="4" fill="#fff"/><circle cx="8" cy="8" r="1.8" fill="#7a7d97"/></svg>

<!-- DIALOG -->
<div class="a" style="left:409px;top:269px;width:532px;height:455px;border-radius:10px;border:1px solid #5e5e5e;background:#2c2c2c;overflow:hidden;box-shadow:0 0 0 1px #000,0 8px 30px rgba(0,0,0,.55)">
  <div class="a" style="left:0;top:0;width:530px;height:28px;background:#2c2c2c"></div>
  <div class="a" style="left:0;top:28px;width:530px;height:1px;background:#0d0d0d"></div>
</div>
<div class="dot" style="left:417px;top:277px"></div>
<div class="dot" style="left:437px;top:277px"></div>
<div class="dot" style="left:457px;top:277px"></div>
<div class="t" style="left:525px;top:275px;width:300px;text-align:center;font:bold 13.3px 'Liberation Sans';color:#707070;-webkit-text-stroke:0.2px #707070">"Show Custom Dialog" Options</div>
<div class="a" style="left:429px;top:319px;width:492px;height:354px;background:#313131;border:1px solid #484848;border-radius:5px"></div>
<div class="a" style="left:593px;top:309px;width:166px;height:22px;background:#2d2d2d;border:1px solid #505050;border-radius:6px"></div>
<div class="a" style="left:593px;top:309px;width:70px;height:22px;background:#6a6a6a;border-radius:6px"></div>
<div class="t" style="left:593px;top:312px;width:70px;text-align:center;font:13px 'Liberation Sans';color:#efefef;-webkit-text-stroke:0.25px #efefef">General</div>
<div class="t" style="left:663px;top:312px;width:96px;text-align:center;font:13.4px 'Liberation Sans';color:#efefef;-webkit-text-stroke:0.25px #efefef">Input Fields</div>
<div class="t" style="left:448px;top:350px;font:11.5px 'Liberation Sans';letter-spacing:0.18px;color:#e6e6e6;-webkit-text-stroke:0.2px #e6e6e6;line-height:14px">Specify the title, message and buttons that you wish to display in the dialog. For the<br>title and message, you can enter specific values, or get them from a calculation.</div>
<div class="t" style="left:448px;top:390px;font:13.5px 'Liberation Sans';color:#e6e6e6;-webkit-text-stroke:0.25px #e6e6e6">Title</div>
<div class="a" style="left:449px;top:413px;width:349px;height:20px;background:#3c3c3c;border:1px solid #4e4e4e"></div>
<div class="t" style="left:453px;top:415px;font:13.5px 'Liberation Sans';color:#f2f2f2;-webkit-text-stroke:0.25px #f2f2f2">"Button Clicked!"</div>
<div class="a" style="left:815px;top:415px;width:84px;height:20px;background:#686868;border-radius:5px"></div>
<div class="t" style="left:815px;top:417px;width:84px;text-align:center;font:13.4px 'Liberation Sans';color:#f2f2f2;-webkit-text-stroke:0.25px #f2f2f2">Specify...</div>
<div class="t" style="left:448px;top:443px;font:13.5px 'Liberation Sans';color:#e6e6e6;-webkit-text-stroke:0.25px #e6e6e6">Message</div>
<div class="a" style="left:449px;top:460px;width:350px;height:71px;background:#1d1d1d;border:1px solid #464646"></div>
<div class="a" style="left:783px;top:461px;width:15px;height:69px;background:#3a3a3a"></div>
<div class="t" style="left:455px;top:462px;font:13.5px 'Liberation Sans';color:#f2f2f2;-webkit-text-stroke:0.25px #f2f2f2">Get(ScriptParameter)</div>
<div class="a" style="left:815px;top:461px;width:84px;height:20px;background:#686868;border-radius:5px"></div>
<div class="t" style="left:815px;top:463px;width:84px;text-align:center;font:13.4px 'Liberation Sans';color:#f2f2f2;-webkit-text-stroke:0.25px #f2f2f2">Specify...</div>
<div class="t" style="left:448px;top:544px;font:11.5px 'Liberation Sans';letter-spacing:0.18px;color:#e6e6e6;-webkit-text-stroke:0.2px #e6e6e6;line-height:14px">Enter the text to be used as a label for each button that you wish to display. Buttons<br>will only be displayed if they are labeled.</div>
<div class="t" style="left:398px;top:583px;width:139px;text-align:right;font:13.5px 'Liberation Sans';color:#e6e6e6;-webkit-text-stroke:0.25px #e6e6e6">Default Button</div>
<div class="a" style="left:554px;top:581px;width:139px;height:20px;background:#3c3c3c;border:1px solid #4e4e4e"></div>
<div class="t" style="left:558px;top:583px;font:13.5px 'Liberation Sans';color:#f2f2f2;-webkit-text-stroke:0.25px #f2f2f2">"OK"</div>
<div class="a" style="left:703px;top:581px;width:84px;height:20px;background:#686868;border-radius:5px"></div>
<div class="t" style="left:703px;top:583px;width:84px;text-align:center;font:13.4px 'Liberation Sans';color:#f2f2f2;-webkit-text-stroke:0.25px #f2f2f2">Specify...</div>
<div class="a" style="left:802px;top:584px;width:14px;height:14px;background:#656565;border-radius:3px"></div>
<svg class="a" style="left:802px;top:584px" width="14" height="14" viewBox="0 0 14 14"><path d="M3 7.5 L6 11 L11.5 3" fill="none" stroke="#f4f4f4" stroke-width="2"/></svg>
<div class="t" style="left:822px;top:584px;font:13.5px 'Liberation Sans';color:#e6e6e6;-webkit-text-stroke:0.25px #e6e6e6">Commit Data</div>
<div class="t" style="left:400px;top:613px;width:139px;text-align:right;font:13.5px 'Liberation Sans';color:#e6e6e6;-webkit-text-stroke:0.25px #e6e6e6">Button 2</div>
<div class="a" style="left:554px;top:611px;width:139px;height:20px;background:#3c3c3c;border:1px solid #4e4e4e"></div>
<div class="a" style="left:703px;top:611px;width:84px;height:20px;background:#686868;border-radius:5px"></div>
<div class="t" style="left:703px;top:613px;width:84px;text-align:center;font:13.4px 'Liberation Sans';color:#f2f2f2;-webkit-text-stroke:0.25px #f2f2f2">Specify...</div>
<div class="a" style="left:802px;top:614px;width:14px;height:14px;background:#585858;border-radius:3px"></div>
<div class="t" style="left:822px;top:614px;font:13.5px 'Liberation Sans';color:#e6e6e6;-webkit-text-stroke:0.25px #e6e6e6">Commit Data</div>
<div class="t" style="left:400px;top:643px;width:139px;text-align:right;font:13.5px 'Liberation Sans';color:#e6e6e6;-webkit-text-stroke:0.25px #e6e6e6">Button 3</div>
<div class="a" style="left:554px;top:641px;width:139px;height:20px;background:#3c3c3c;border:1px solid #4e4e4e"></div>
<div class="a" style="left:703px;top:641px;width:84px;height:20px;background:#686868;border-radius:5px"></div>
<div class="t" style="left:703px;top:643px;width:84px;text-align:center;font:13.4px 'Liberation Sans';color:#f2f2f2;-webkit-text-stroke:0.25px #f2f2f2">Specify...</div>
<div class="a" style="left:802px;top:644px;width:14px;height:14px;background:#585858;border-radius:3px"></div>
<div class="t" style="left:822px;top:644px;font:13.5px 'Liberation Sans';color:#e6e6e6;-webkit-text-stroke:0.25px #e6e6e6">Commit Data</div>
<div class="a" style="left:742px;top:684px;width:82px;height:20px;background:#686868;border-radius:5px"></div>
<div class="t" style="left:742px;top:686px;width:82px;text-align:center;font:13.5px 'Liberation Sans';color:#f2f2f2;-webkit-text-stroke:0.25px #f2f2f2">Cancel</div>
<div class="a" style="left:838px;top:684px;width:82px;height:20px;background:#686868;border-radius:5px"></div>
<div class="t" style="left:838px;top:686px;width:82px;text-align:center;font:13.5px 'Liberation Sans';color:#f2f2f2;-webkit-text-stroke:0.25px #f2f2f2">OK</div>


</body></html>
